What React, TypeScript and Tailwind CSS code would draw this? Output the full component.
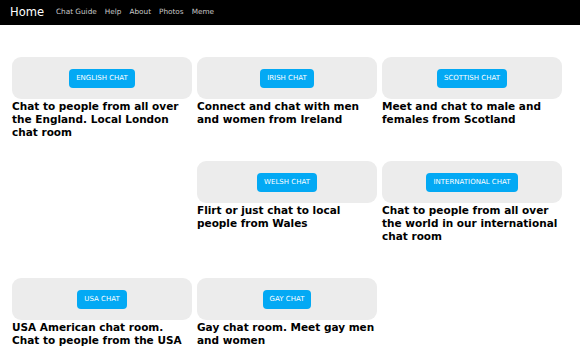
const links = ["Chat Guide", "Help", "About", "Photos", "Meme"];

const rooms = [
  { label: "ENGLISH CHAT", text: "Chat to people from all over the England. Local London chat room", tall: true },
  { label: "IRISH CHAT", text: "Connect and chat with men and women from Ireland" },
  { label: "SCOTTISH CHAT", text: "Meet and chat to male and females from Scotland" },
  { label: "WELSH CHAT", text: "Flirt or just chat to local people from Wales" },
  { label: "INTERNATIONAL CHAT", text: "Chat to people from all over the world in our international chat room" },
  { label: "USA CHAT", text: "USA American chat room. Chat to people from the USA" },
  { label: "GAY CHAT", text: "Gay chat room. Meet gay men and women" },
];

export default function App() {
  return (
    <div className="min-h-[362px] bg-white font-['DejaVu_Sans',sans-serif]">
      <nav className="h-[25px] bg-black flex items-center px-[10px]">
        <a className="text-white text-[11.5px] mr-[12px]">Home</a>
        <div className="flex items-center gap-[8px]">
          {links.map((l) => (
            <a key={l} className="text-[#c8c8c8] text-[7.3px]">{l}</a>
          ))}
        </div>
      </nav>
      <div className="grid grid-cols-[180px_180px_180px] gap-x-[5px] pl-[12px] pt-[32px]">
        {rooms.map((r) => (
          <div key={r.label} className={r.tall ? "row-span-2 pb-[35px]" : "pb-[35px]"}>
            <div className="h-[42px] rounded-[9px] bg-[#ececec] flex items-center justify-center">
              <button className="h-[19px] px-[7px] rounded-[4px] bg-[#03a9f4] text-white text-[7px] leading-none">
                {r.label}
              </button>
            </div>
            <p className="mt-[1px] text-[10.5px] leading-[13px] font-bold text-black">{r.text}</p>
          </div>
        ))}
      </div>
    </div>
  );
}
